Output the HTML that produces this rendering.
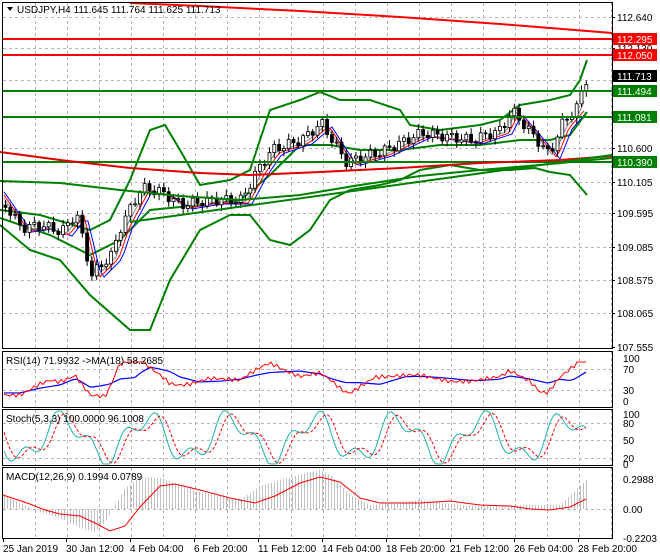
<!DOCTYPE html>
<html><head><meta charset="utf-8"><style>
html,body{margin:0;padding:0;background:#fff;width:660px;height:560px;overflow:hidden}
svg{display:block;font-family:"Liberation Sans",sans-serif;font-size:10px}
</style></head><body>
<svg id="s" width="660" height="560" xmlns="http://www.w3.org/2000/svg">
<rect x="0" y="0" width="660" height="560" fill="#fff"/>
<g id="grid" stroke="#b4b4b4" stroke-dasharray="3,3" stroke-width="1"></g>
<g id="main"></g>
<polyline points="130,3 200,6 300,11 400,17 500,24 612,33" fill="none" stroke="#f00" stroke-width="2"/>
<line x1="3" y1="39" x2="612" y2="39" stroke="#f00" stroke-width="2"/>
<line x1="3" y1="55" x2="612" y2="55" stroke="#f00" stroke-width="2"/>
<line x1="3" y1="91" x2="612" y2="91" stroke="#008000" stroke-width="2"/>
<line x1="3" y1="117" x2="612" y2="117" stroke="#008000" stroke-width="2"/>
<line x1="3" y1="162" x2="612" y2="162" stroke="#008000" stroke-width="2"/>
<polyline points="0,152 60,160 130,168 200,173 250,175 320,172 400,168 480,163 560,160 612,156" fill="none" stroke="#e00000" stroke-width="2"/>
<polyline points="0,181 60,183 120,190 180,196 240,200 300,195 360,185 420,176 480,170 540,165 612,158" fill="none" stroke="#008000" stroke-width="2"/>
<line x1="130" y1="222" x2="612" y2="155" stroke="#008000" stroke-width="2"/>
<g fill="none" stroke="#000" stroke-width="1">
<rect x="2.5" y="2.5" width="610" height="346"/>
<rect x="2.5" y="351.5" width="610" height="56"/>
<rect x="2.5" y="409.5" width="610" height="56"/>
<rect x="2.5" y="467.5" width="610" height="71"/>
</g>
<g id="axis" fill="#000"></g>
<rect x="613" y="33" width="44" height="12" fill="#f00"/><text x="617" y="43" fill="#fff">112.295</text>
<rect x="613" y="49" width="44" height="12" fill="#f00"/><text x="617" y="59" fill="#fff">112.050</text>
<rect x="613" y="70" width="44" height="12" fill="#000"/><text x="617" y="80" fill="#fff">111.713</text>
<rect x="613" y="85" width="44" height="12" fill="#008000"/><text x="617" y="95" fill="#fff">111.494</text>
<rect x="613" y="111" width="44" height="12" fill="#008000"/><text x="617" y="121" fill="#fff">111.081</text>
<rect x="613" y="156" width="44" height="12" fill="#008000"/><text x="617" y="166" fill="#fff">110.390</text>
<path d="M7 7 L13 7 L10 11 Z" fill="#000"/>
<text x="17" y="13" fill="#000">USDJPY,H4  111.645 111.764 111.625 111.713</text>
<text x="6" y="364">RSI(14) 71.9932  -&gt;MA(18) 58.2685</text>
<text x="6" y="422">Stoch(5,3,3) 100.0000 96.1008</text>
<text x="6" y="480">MACD(12,26,9) 0.1994 0.0789</text>
</svg>
<script>
var NS='http://www.w3.org/2000/svg';
function el(p,t,a){var e=document.createElementNS(NS,t);for(var k in a)e.setAttribute(k,a[k]);p.appendChild(e);return e;}
var grid=document.getElementById('grid'),main=document.getElementById('main'),ax=document.getElementById('axis');
for(var gx=35;gx<612;gx+=32){[[3,348],[352,407],[410,465],[468,538]].forEach(function(r){el(grid,'line',{x1:gx+.5,y1:r[0],x2:gx+.5,y2:r[1]});});}
[17,48,80,116,148,182,213,247,280,313,369,390,423,440,458,509].forEach(function(y){el(grid,'line',{x1:3,y1:y+.5,x2:612,y2:y+.5});});
function lbl(t,x,y){var e=el(ax,'text',{x:x,y:y});e.textContent=t;}
[['112.640',17],['112.130',48],['110.600',148],['110.105',182],['109.595',213],['109.085',247],['108.575',280],['108.065',313],['107.555',347]].forEach(function(a){lbl(a[0],617,a[1]+4);el(ax,'line',{x1:612,y1:a[1]+.5,x2:615,y2:a[1]+.5,stroke:'#000'});});
[['100',358],['70',369],['30',390],['0',401],['100',414],['80',423],['50',440],['20',458],['0',464],['0.2988',479],['0.00',509],['-0.2203',538]].forEach(function(a){lbl(a[0],623,a[1]+4);});
[['25 Jan 2019',3],['30 Jan 12:00',66],['4 Feb 04:00',130],['6 Feb 20:00',194],['11 Feb 12:00',258],['14 Feb 04:00',322],['18 Feb 20:00',386],['21 Feb 12:00',450],['26 Feb 04:00',514],['28 Feb 20:00',578]].forEach(function(a){lbl(a[0],a[1],552);el(ax,'line',{x1:a[1]+.5,y1:538,x2:a[1]+.5,y2:542,stroke:'#000'});});
function interp(pts,x){for(var i=1;i<pts.length;i++){if(x<=pts[i][0]){var a=pts[i-1],b=pts[i],t=(x-a[0])/(b[0]-a[0]);return a[1]+(b[1]-a[1])*t;}}return pts[pts.length-1][1];}
function poly(pts,col,w,g,dash){var d=pts.map(function(p){return p[0]+','+p[1];}).join(' ');var a={points:d,fill:'none',stroke:col,'stroke-width':w||1};if(dash)a['stroke-dasharray']=dash;el(g||main,'polyline',a);}
var P=[[4,205],[20,228],[40,225],[60,232],[75,213],[90,275],[110,255],[120,225],[140,188],[160,192],[180,205],[210,200],[240,200],[255,172],[270,150],[300,140],[320,123],[345,162],[380,152],[420,133],[470,140],[500,130],[510,110],[540,145],[548,155],[560,125],[575,108],[586,76]];
var up=[[0,210],[40,215],[90,230],[110,220],[130,180],[150,130],[165,125],[180,150],[200,185],[230,180],[250,170],[270,110],[300,100],[320,92],[340,100],[370,100],[400,110],[410,125],[440,130],[480,125],[500,120],[520,105],[550,100],[570,95],[580,80],[587,60]];
var lo=[[0,225],[30,250],[60,260],[90,295],[130,330],[150,330],[170,280],[200,230],[230,215],[250,215],[270,240],[290,245],[310,230],[330,200],[350,190],[380,185],[400,180],[420,170],[450,165],[480,170],[510,170],[535,168],[550,172],[570,175],[587,195]];
var md=[[0,218],[50,235],[90,255],[120,240],[150,210],[200,205],[240,200],[270,175],[300,145],[330,145],[360,150],[400,150],[440,145],[480,145],[520,140],[550,140],[570,135],[587,112]];
poly(up,'#008000',2);poly(lo,'#008000',2);poly(md,'#008000',2);
var m1=[],m2=[],m3=[];for(var x=4;x<=586;x+=4){m1.push([x,interp(P,x-6)+2]);m2.push([x,interp(P,x-9)+3]);m3.push([x,interp(P,x-12)+4]);}
poly(m3,'#00f',1);poly(m2,'#f00',1);poly(m1,'#888',1);
var prev=interp(P,4);
for(var x=4;x<=586;x+=4.8){var c=interp(P,x)+Math.sin(x*1.7)*5,o=prev;prev=c;var hi=Math.min(o,c)-2-Math.abs(Math.sin(x))*4,lw=Math.max(o,c)+2+Math.abs(Math.cos(x))*4;
el(main,'line',{x1:x+1.5,y1:hi,x2:x+1.5,y2:lw,stroke:'#000'});
var bt=Math.min(o,c),bh=Math.max(1,Math.abs(o-c));el(main,'rect',{x:x,y:bt,width:3,height:bh,fill:c<o?'#fff':'#000',stroke:'#000','stroke-width':0.8});}
var r=[],rm=[];for(var x=4;x<=586;x+=3){var base=380+(interp(P,x)-interp(P,x-30))*0.35;r.push([x,Math.max(362,Math.min(400,base+Math.sin(x*0.9)*2))]);rm.push([x,380+(interp(P,x)-interp(P,x-60))*0.15]);}
poly(rm,'#00f',1.2);poly(r,'#f00',1);
var k=[],d=[];for(var x=4;x<=586;x+=3){var v=438+20*Math.sin(x*0.075)+10*Math.sin(x*0.19);k.push([x,Math.max(411,Math.min(464,v))]);var w=438+18*Math.sin((x-6)*0.075)+8*Math.sin((x-6)*0.19);d.push([x,Math.max(412,Math.min(463,w))]);}
poly(k,'#20b2aa',1);poly(d,'#f00',1,null,'3,2');
var H=[[4,495],[20,503],[40,512],[60,518],[80,528],[95,532],[105,522],[125,488],[140,477],[160,478],[200,492],[240,500],[260,486],[300,474],[320,470],[330,475],[350,495],[370,505],[420,500],[450,504],[480,506],[530,505],[560,505],[586,480]];
for(var x=4;x<=586;x+=3){var y0=interp(H,x);el(main,'line',{x1:x+.5,y1:509,x2:x+.5,y2:y0,stroke:'#c0c0c0'});}
var sig=[[3,495],[30,504],[45,510],[60,514],[80,516],[95,523],[110,531],[125,526],[140,507],[160,486],[175,484],[200,490],[230,498],[255,503],[275,496],[300,483],[320,477],[340,482],[360,498],[380,503],[420,503],[450,501],[480,505],[510,506],[530,509],[550,510],[570,507],[586,499]];
poly(sig,'#f00',1);
</script>
</body></html>
